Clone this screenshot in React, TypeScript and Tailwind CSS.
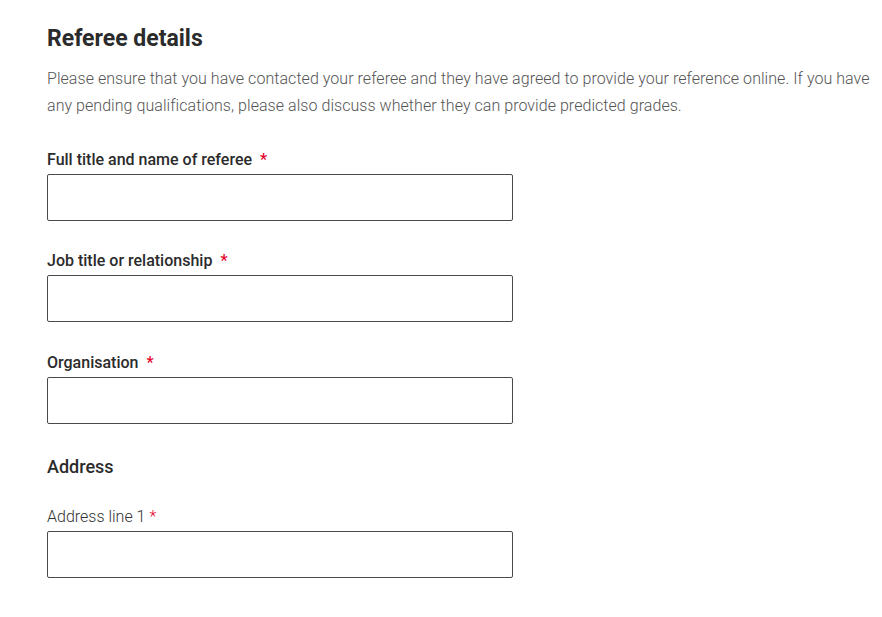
import React from "react";

interface FieldProps {
  label: string;
  bold?: boolean;
  gap?: string;
}

const Field: React.FC<FieldProps> = ({ label, bold = true, gap = "mb-[30px]" }) => (
  <div className={gap}>
    {bold ? (
      <label className="block text-[16px] leading-[21px] font-medium text-[#2b2b2b]">
        {label}
        <span className="ml-2 text-[#e4002b]">*</span>
      </label>
    ) : (
      <label className="block text-[16px] leading-[22px] font-light text-[#333]">
        {label}
        <span className="ml-1 text-[#e4002b]">*</span>
      </label>
    )}
    <input
      type="text"
      className={`block w-[466px] h-[47px] border border-[#4a4a4a] rounded-[2px] bg-white ${bold ? "mt-1" : "mt-[3px]"}`}
    />
  </div>
);

export default function App() {
  return (
    <div
      className="min-h-[617px] bg-white pl-[47px] pr-[8px] pt-[25px]"
      style={{ fontFamily: "Roboto, 'Liberation Sans', sans-serif" }}
    >
      <h2 className="text-[23px] leading-[28px] font-bold text-[#2b2b2b]">Referee details</h2>
      <p className="mt-[12px] text-[16px] leading-[27px] font-light tracking-[0.05px] text-[#555]">
        Please ensure that you have contacted your referee and they have agreed to provide your reference
        online. If you have any pending qualifications, please also discuss whether they can provide predicted
        grades.
      </p>

      <div className="mt-[30px]">
        <Field label="Full title and name of referee" gap="mb-[29px]" />
        <Field label="Job title or relationship" gap="mb-[30px]" />
        <Field label="Organisation" gap="mb-[31px]" />
      </div>

      <h3 className="text-[18px] leading-[24px] font-medium text-[#2b2b2b]">Address</h3>
      <div className="mt-[27px]">
        <Field label="Address line 1" bold={false} />
      </div>
    </div>
  );
}
